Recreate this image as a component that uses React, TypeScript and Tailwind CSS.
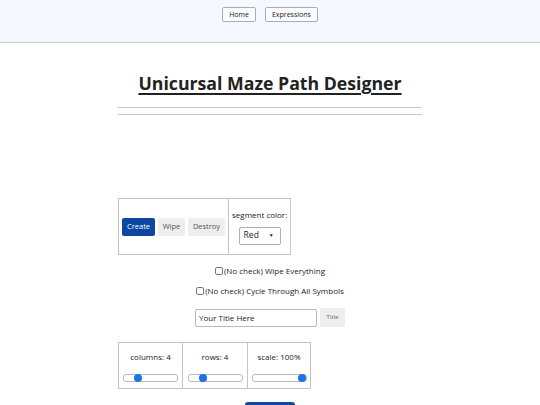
import React from "react";

const font = { fontFamily: '"Open Sans", "Noto Sans", sans-serif' };

function Slider({ pos }: { pos: number }) {
  return (
    <div className="relative mx-auto h-[8px] w-[55px] rounded-[3px] border border-[#b9b9b9] bg-white">
      <div
        className="absolute top-1/2 h-[8px] w-[8px] -translate-x-1/2 -translate-y-1/2 rounded-full bg-[#1a73e8]"
        style={{ left: `${pos}%` }}
      />
    </div>
  );
}

function Check({ label }: { label: string }) {
  return (
    <label className="flex items-center gap-[1px] text-[8px] leading-[11px] text-[#222]">
      <span className="inline-block h-[8px] w-[8px] rounded-[2px] border border-[#777] bg-white" />
      {label}
    </label>
  );
}

export default function App() {
  return (
    <div className="min-h-[405px] bg-white" style={font}>
      <header className="flex h-[43px] justify-center gap-[9px] border-b border-[#c9cad8] bg-[#f5f8ff] pt-[7px]">
        <button className="h-[15px] rounded-[2px] border border-[#a9adb8] bg-[#fbfcff] px-[6px] text-[7px] leading-none text-[#222]">
          Home
        </button>
        <button className="h-[15px] rounded-[2px] border border-[#a9adb8] bg-[#fbfcff] px-[6px] text-[7px] leading-none text-[#222]">
          Expressions
        </button>
      </header>

      <main className="mx-auto flex w-[304px] flex-col items-center">
        <h1 className="mt-[27px] text-[17.7px] font-bold leading-[26px] text-[#222] underline decoration-[1.5px] underline-offset-[3px]">
          Unicursal Maze Path Designer
        </h1>
        <div className="mt-[11px] h-px w-[304px] bg-[#c8c8c8]" />
        <div className="mt-[6px] h-px w-[304px] bg-[#c8c8c8]" />

        <table className="mt-[83px] self-start border-collapse border border-[#c4c4c4]">
          <tbody>
            <tr className="h-[56px]">
              <td className="border border-[#c4c4c4] pl-[3px] pr-[3px] align-middle">
                <div className="flex gap-[3px]">
                  <button className="h-[18px] w-[33px] rounded-[2px] bg-[#0d47a1] text-[7.5px] text-white">Create</button>
                  <button className="h-[18px] w-[27px] rounded-[2px] bg-[#eeeeee] text-[7.5px] text-[#555]">Wipe</button>
                  <button className="h-[18px] w-[37px] rounded-[2px] bg-[#eeeeee] text-[7.5px] text-[#555]">Destroy</button>
                </div>
              </td>
              <td className="border border-[#c4c4c4] px-[3px] text-center align-middle">
                <div className="text-[8px] leading-[12px] text-[#222]">segment color:</div>
                <div className="mx-auto mt-[6px] flex h-[18px] w-[42px] items-center justify-between rounded-[2px] border border-[#b0b0b0] bg-white pl-[4px] pr-[6px] text-[8.5px] text-[#222]">
                  <span>Red</span>
                  <span className="text-[5px]">▼</span>
                </div>
              </td>
            </tr>
          </tbody>
        </table>

        <div className="mt-[10px]">
          <Check label="(No check) Wipe Everything" />
        </div>
        <div className="mt-[9px]">
          <Check label="(No check) Cycle Through All Symbols" />
        </div>

        <div className="mt-[12px] flex items-center gap-[3px]">
          <div className="flex h-[18px] w-[122px] items-center rounded-[2px] border border-[#b9b9b9] bg-white pl-[3px] text-[8px] text-[#222]">
            Your Title Here
          </div>
          <button className="h-[19px] w-[25px] rounded-[2px] bg-[#eeeeee] text-[6px] text-[#666]">Title</button>
        </div>

        <table className="mt-[15px] self-start border-collapse border border-[#c4c4c4]">
          <tbody>
            <tr className="h-[46px]">
              <td className="w-[64px] border border-[#c4c4c4] align-top">
                <div className="mt-[8px] text-center text-[8px] text-[#222]">columns: 4</div>
                <div className="mt-[11px]"><Slider pos={27} /></div>
              </td>
              <td className="w-[65px] border border-[#c4c4c4] align-top">
                <div className="mt-[8px] text-center text-[8px] text-[#222]">rows: 4</div>
                <div className="mt-[11px]"><Slider pos={27} /></div>
              </td>
              <td className="w-[63px] border border-[#c4c4c4] align-top">
                <div className="mt-[8px] text-center text-[8px] text-[#222]">scale: 100%</div>
                <div className="mt-[11px]"><Slider pos={93} /></div>
              </td>
            </tr>
          </tbody>
        </table>

        <button className="mt-[13px] h-[20px] w-[50px] rounded-[3px] bg-[#0d47a1] text-[8px] text-white">Generate</button>
      </main>
    </div>
  );
}
